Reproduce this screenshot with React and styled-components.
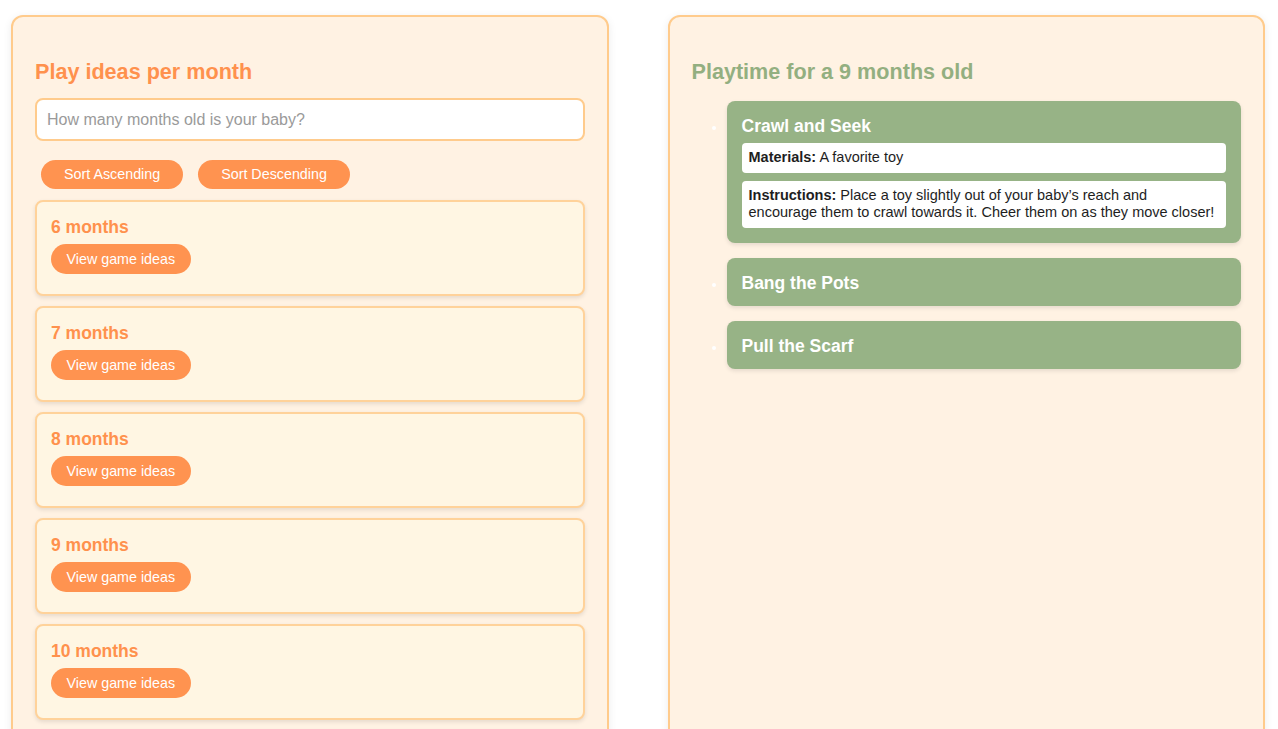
import React from "react";
import styled, { createGlobalStyle } from "styled-components";

const Global = createGlobalStyle`
  html, body { margin: 0; padding: 0; background: #ffffff; }
  body { font-family: "Liberation Sans", Arial, Helvetica, sans-serif; }
  * { box-sizing: border-box; }
`;

const Page = styled.div`
  display: grid;
  grid-template-columns: 1fr 1fr;
  gap: 59px;
  padding: 15px 13px 0 11px;
`;

const Panel = styled.section`
  background: #fff2e3;
  border: 2px solid #ffcb8c;
  border-radius: 12px;
  padding: 22px;
  box-shadow: 0 2px 8px rgba(0, 0, 0, 0.08);
`;

const Title = styled.h2`
  margin: 21px 0 15px;
  font-size: 21.6px;
  line-height: 23px;
  font-weight: 700;
  color: ${(p) => (p.$green ? "#93af80" : "#ff914d")};
`;

const SearchInput = styled.input`
  display: block;
  width: 100%;
  height: 43px;
  border: 2px solid #ffcb8c;
  border-radius: 8px;
  padding: 0 10px;
  font-family: inherit;
  font-size: 16px;
  color: #333;
  background: #fff;
  outline: none;
  &::placeholder { color: #9a9a9a; }
`;

const SortRow = styled.div`
  display: flex;
  gap: 15px;
  padding: 19px 6px 11px;
`;

const Pill = styled.button`
  border: none;
  border-radius: 999px;
  background: #ff9350;
  color: #fff;
  font-family: inherit;
  font-size: 14.3px;
  line-height: 17px;
  padding: ${(p) => (p.$compact ? "6.5px 15.5px" : "6px 23px")};
  cursor: pointer;
`;

const MonthList = styled.div`
  display: flex;
  flex-direction: column;
  gap: 10px;
`;

const MonthCard = styled.div`
  background: #fff6e3;
  border: 2px solid #ffd29a;
  border-radius: 8px;
  padding: 14px 14px 20px;
  box-shadow: 0 2px 4px rgba(0, 0, 0, 0.1);
  display: flex;
  flex-direction: column;
  align-items: flex-start;
`;

const MonthTitle = styled.h3`
  margin: 1px 0 7px;
  font-size: 17.5px;
  line-height: 20px;
  font-weight: 700;
  color: #ff914d;
`;

const GameList = styled.ul`
  margin: 0;
  padding: 3px 0 0 35px;
  display: flex;
  flex-direction: column;
  gap: 15px;
`;

const GameItem = styled.li`
  background: #97b386;
  color: #fff;
  border-radius: 8px;
  padding: 15px 15px 13px;
  font-size: 14px;
  box-shadow: 0 2px 4px rgba(0, 0, 0, 0.1);
  &[data-open="true"] { padding-bottom: 15px; }
`;

const GameTitle = styled.div`
  font-size: 17.5px;
  line-height: 20px;
  font-weight: 700;
`;

const Detail = styled.div`
  background: #fff;
  color: #1e1e1e;
  border-radius: 4px;
  padding: 6px 9px 6px 7px;
  font-size: 14.5px;
  line-height: 17.5px;
  margin-top: ${(p) => (p.$first ? "7px" : "8px")};
  & b { font-weight: 700; }
`;

const months = [6, 7, 8, 9, 10, 11, 12];

const games = [
  {
    name: "Crawl and Seek",
    materials: "A favorite toy",
    instructions:
      "Place a toy slightly out of your baby’s reach and encourage them to crawl towards it. Cheer them on as they move closer!",
    open: true,
  },
  { name: "Bang the Pots" },
  { name: "Pull the Scarf" },
];

export default function App() {
  return (
    <>
      <Global />
      <Page>
        <Panel>
          <Title>Play ideas per month</Title>
          <SearchInput placeholder="How many months old is your baby?" />
          <SortRow>
            <Pill>Sort Ascending</Pill>
            <Pill>Sort Descending</Pill>
          </SortRow>
          <MonthList>
            {months.map((m) => (
              <MonthCard key={m}>
                <MonthTitle>{m} months</MonthTitle>
                <Pill $compact>View game ideas</Pill>
              </MonthCard>
            ))}
          </MonthList>
        </Panel>
        <Panel>
          <Title $green>Playtime for a 9 months old</Title>
          <GameList>
            {games.map((g) => (
              <GameItem key={g.name} data-open={g.open ? "true" : "false"}>
                <GameTitle>{g.name}</GameTitle>
                {g.open && (
                  <>
                    <Detail $first>
                      <b>Materials:</b> {g.materials}
                    </Detail>
                    <Detail>
                      <b>Instructions:</b> {g.instructions}
                    </Detail>
                  </>
                )}
              </GameItem>
            ))}
          </GameList>
        </Panel>
      </Page>
    </>
  );
}
